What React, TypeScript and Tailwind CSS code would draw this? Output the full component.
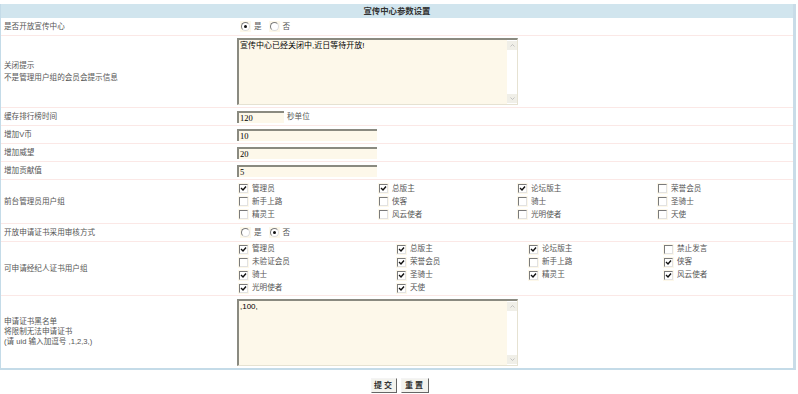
const font = { fontFamily: '"Liberation Sans", "Noto Sans CJK SC", sans-serif' };
const serif = { fontFamily: '"Liberation Serif", "Noto Sans CJK SC", serif' };

const frontGroups = [
  { name: "管理员", on: true },
  { name: "总版主", on: true },
  { name: "论坛版主", on: true },
  { name: "荣誉会员", on: false },
  { name: "新手上路", on: false },
  { name: "侠客", on: false },
  { name: "骑士", on: false },
  { name: "圣骑士", on: false },
  { name: "精灵王", on: false },
  { name: "风云使者", on: false },
  { name: "光明使者", on: false },
  { name: "天使", on: false },
];

const certGroups = [
  { name: "管理员", on: true },
  { name: "总版主", on: true },
  { name: "论坛版主", on: true },
  { name: "禁止发言", on: false },
  { name: "未验证会员", on: false },
  { name: "荣誉会员", on: true },
  { name: "新手上路", on: false },
  { name: "侠客", on: true },
  { name: "骑士", on: true },
  { name: "圣骑士", on: true },
  { name: "精灵王", on: true },
  { name: "风云使者", on: true },
  { name: "光明使者", on: true },
  { name: "天使", on: true },
];

function Check({ on, label }: { on: boolean; label: string }) {
  return (
    <div className="flex h-[13px] items-center gap-[3px]">
      <span className="flex h-[11px] w-[11px] items-center justify-center bg-[#fdf8ea]">
        <span className="flex h-[9px] w-[9px] items-center justify-center border border-t-[#7b7b7b] border-l-[#7b7b7b] border-r-[#e2e2e2] border-b-[#e2e2e2] bg-white">
          {on && (
            <svg width="7" height="7" viewBox="0 0 7 7">
              <path d="M1 3 L3 5 L6 1.5" fill="none" stroke="#111" strokeWidth="1.4" />
            </svg>
          )}
        </span>
      </span>
      <span>{label}</span>
    </div>
  );
}

function Radio({ on, label }: { on: boolean; label: string }) {
  return (
    <div className="flex items-center gap-[3px]">
      <span className="flex h-[11px] w-[11px] items-center justify-center bg-[#fdf8ea]">
        <span className="flex h-[9px] w-[9px] items-center justify-center rounded-full border border-t-[#7b7b7b] border-l-[#7b7b7b] border-r-[#dcdcdc] border-b-[#dcdcdc] bg-white">
          {on && <span className="h-[3px] w-[3px] rounded-full bg-[#111]" />}
        </span>
      </span>
      <span>{label}</span>
    </div>
  );
}

function Input({ value, w }: { value: string; w: string }) {
  return (
    <div
      className={`${w} h-[12px] border-t-2 border-l-2 border-t-[#8a8a80] border-l-[#8a8a80] bg-[#fdf8ea] pl-[1px] text-[8.5px] leading-[10px] text-black`}
      style={serif}
    >
      {value}
    </div>
  );
}

function TextBox({ value }: { value: string }) {
  return (
    <div className="flex h-[67px] w-[281px] border-t-2 border-l-2 border-r border-b border-t-[#8a8a80] border-l-[#8a8a80] border-r-[#e6e2d2] border-b-[#e6e2d2] bg-[#fdf8ea]">
      <div className="flex-1 pl-[1px] pt-[1px] text-[8px] leading-[10px] text-black">{value}</div>
      <div className="flex w-[10px] flex-col justify-between bg-white py-[1px]">
        <div className="flex h-[9px] items-center justify-center bg-[#f0efe8]">
          <svg width="5" height="3" viewBox="0 0 5 3">
            <path d="M0.5 2.5 L2.5 0.5 L4.5 2.5" fill="none" stroke="#b8b8b8" strokeWidth="0.8" />
          </svg>
        </div>
        <div className="flex h-[9px] items-center justify-center bg-[#f0efe8]">
          <svg width="5" height="3" viewBox="0 0 5 3">
            <path d="M0.5 0.5 L2.5 2.5 L4.5 0.5" fill="none" stroke="#b8b8b8" strokeWidth="0.8" />
          </svg>
        </div>
      </div>
    </div>
  );
}

function Row({ label, children, h }: { label: React.ReactNode; children: React.ReactNode; h: string }) {
  return (
    <div className={`flex ${h} border-b border-[#fbe8e6]`}>
      <div className="flex w-[234px] items-center pl-[3px]">{label}</div>
      <div className="flex flex-1 items-center">{children}</div>
    </div>
  );
}

export default function App() {
  return (
    <div className="h-[394px] w-[798px] bg-white pt-[4px] text-[7.6px] text-[#555]" style={font}>
      <div className="w-[796px] border-l border-r-[3px] border-b-2 border-[#c4dbe8] border-r-[#c9dce8]">
        <div className="flex h-[14px] items-center justify-center bg-[#d1e5ee] text-[8.4px] font-bold text-[#333]">
          宣传中心参数设置
        </div>

        <Row h="h-[18px]" label="是否开放宣传中心">
          <div className="flex items-center gap-[7px] pl-[5px]">
            <Radio on label="是" />
            <Radio on={false} label="否" />
          </div>
        </Row>

        <Row
          h="h-[72px]"
          label={
            <div className="leading-[12px]">
              <div>关闭提示</div>
              <div>不是管理用户组的会员会提示信息</div>
            </div>
          }
        >
          <div className="pl-[2px]">
            <TextBox value="宣传中心已经关闭中,近日等待开放!" />
          </div>
        </Row>

        <Row h="h-[18px]" label="缓存排行榜时间">
          <div className="flex items-center gap-[3px] pl-[2px]">
            <Input value="120" w="w-[47px]" />
            <span>秒单位</span>
          </div>
        </Row>

        <Row h="h-[18px]" label="增加V币">
          <div className="pl-[2px]">
            <Input value="10" w="w-[140px]" />
          </div>
        </Row>

        <Row h="h-[18px]" label="增加威望">
          <div className="pl-[2px]">
            <Input value="20" w="w-[140px]" />
          </div>
        </Row>

        <Row h="h-[18px]" label="增加贡献值">
          <div className="pl-[2px]">
            <Input value="5" w="w-[140px]" />
          </div>
        </Row>

        <Row h="h-[44px]" label="前台管理员用户组">
          <div className="grid grid-cols-[140px_139px_140px_130px] pl-[3px]">
            {frontGroups.map((g, i) => (
              <Check key={i} on={g.on} label={g.name} />
            ))}
          </div>
        </Row>

        <Row h="h-[18px]" label="开放申请证书采用审核方式">
          <div className="flex items-center gap-[7px] pl-[5px]">
            <Radio on={false} label="是" />
            <Radio on label="否" />
          </div>
        </Row>

        <Row h="h-[54px]" label="可申请经纪人证书用户组">
          <div className="grid grid-cols-[158px_132px_135px_120px] pl-[3px] leading-[12.7px]">
            {certGroups.map((g, i) => (
              <Check key={i} on={g.on} label={g.name} />
            ))}
          </div>
        </Row>

        <div className="flex h-[72px]">
          <div className="flex w-[234px] items-center pl-[3px]">
            <div className="leading-[10px]">
              <div>申请证书黑名单</div>
              <div>将限制无法申请证书</div>
              <div>(请 uid 输入加逗号 ,1,2,3,)</div>
            </div>
          </div>
          <div className="flex flex-1 items-center pl-[2px]">
            <TextBox value=",100," />
          </div>
        </div>
      </div>

      <div className="mt-[8px] flex justify-center gap-[4px] pl-[2px]">
        <button className="h-[15px] w-[26px] border border-t-[#f4f4f4] border-l-[#f4f4f4] border-r-[#666] border-b-[#666] bg-[#f3f3ee] text-[8px] font-bold tracking-[2px] text-[#333]">
          提交
        </button>
        <button className="h-[15px] w-[28px] border border-t-[#f4f4f4] border-l-[#f4f4f4] border-r-[#666] border-b-[#666] bg-[#f3f3ee] text-[8px] font-bold tracking-[2px] text-[#333]">
          重置
        </button>
      </div>
    </div>
  );
}
